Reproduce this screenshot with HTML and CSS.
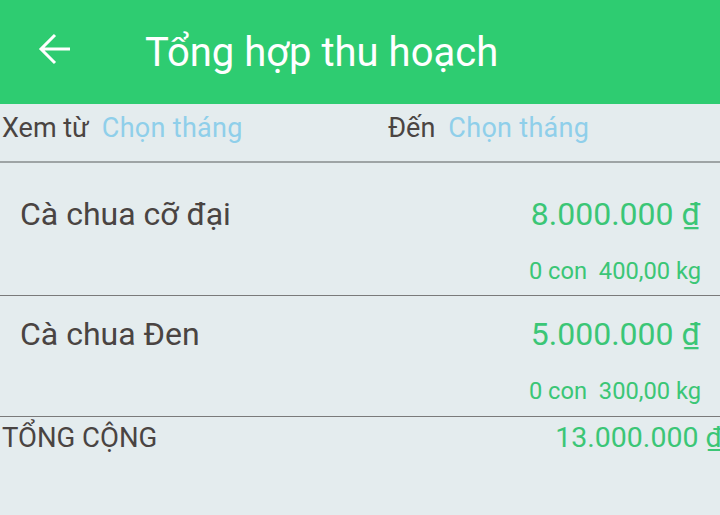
FILE: index.html
```html
<!DOCTYPE html>
<html lang="vi">
<head>
<meta charset="utf-8">
<link rel="stylesheet" href="styles.css">
</head>
<body>
<div class="app">
  <header class="topbar">
    <svg class="back" viewBox="0 0 34 34" width="34" height="34"><path d="M32 17H3M17 3L3 17l14 14" fill="none" stroke="#fff" stroke-width="3"/></svg>
    <h1 class="title">Tổng hợp thu hoạch</h1>
  </header>
  <div class="filter">
    <div class="filter-item from"><span class="lbl">Xem từ</span><span class="pick">Chọn tháng</span></div>
    <div class="filter-item"><span class="lbl">Đến</span><span class="pick">Chọn tháng</span></div>
  </div>
  <div class="item first">
    <div class="row"><span class="name">Cà chua cỡ đại</span><span class="price">8.000.000 ₫</span></div>
    <div class="sub">0 con&nbsp;&nbsp;400,00 kg</div>
  </div>
  <div class="item second">
    <div class="row"><span class="name">Cà chua Đen</span><span class="price">5.000.000 ₫</span></div>
    <div class="sub">0 con&nbsp;&nbsp;300,00 kg</div>
  </div>
  <div class="total">
    <span class="total-lbl">TỔNG CỘNG</span><span class="total-val">13.000.000 ₫</span>
  </div>
</div>
</body>
</html>
```
FILE: styles.css
```css
html, body { margin: 0; padding: 0; }
body { background: #e4ecee; font-family: Roboto, "Noto Sans", sans-serif; width: 720px; height: 515px; overflow: hidden; }
.app { display: flex; flex-direction: column; }
.topbar { height: 104px; background: #2ecc71; display: flex; align-items: center; padding-left: 38px; flex-shrink: 0; }
.back { display: block; margin-top: -7px; }
.title { margin: 0 0 0 73px; font-weight: 400; font-size: 40px; color: #fff; }
.filter { height: 47px; display: flex; align-items: center; padding: 0 0 10px 2px; border-bottom: 2px solid #9ea4a5; }
.filter-item { display: flex; align-items: baseline; font-size: 27px; }
.filter-item.from { width: 386px; }
.lbl { color: #4a4442; margin-right: 13px; }
.pick { color: #8fcfea; letter-spacing: 0.3px; }
.item { box-sizing: border-box; padding: 0 20px; border-bottom: 1px solid #7a7a7a; display: flex; flex-direction: column; }
.item.first { height: 133px; padding-top: 31px; }
.item.second { height: 121px; padding-top: 18px; }
.row { display: flex; justify-content: space-between; align-items: baseline; font-size: 32px; line-height: 40px; }
.name { color: #4a4442; }
.price { color: #3bc676; }
.sub { text-align: right; color: #3bc676; font-size: 23.7px; line-height: 30px; margin-top: 22px; margin-right: -1px; }
.total { display: flex; justify-content: space-between; align-items: baseline; padding-left: 2px; margin-top: 3px; line-height: 36px; }
.total-lbl { color: #4a4442; font-size: 27.5px; }
.total-val { color: #3bc676; font-size: 28.5px; margin-right: -2px; }
```
